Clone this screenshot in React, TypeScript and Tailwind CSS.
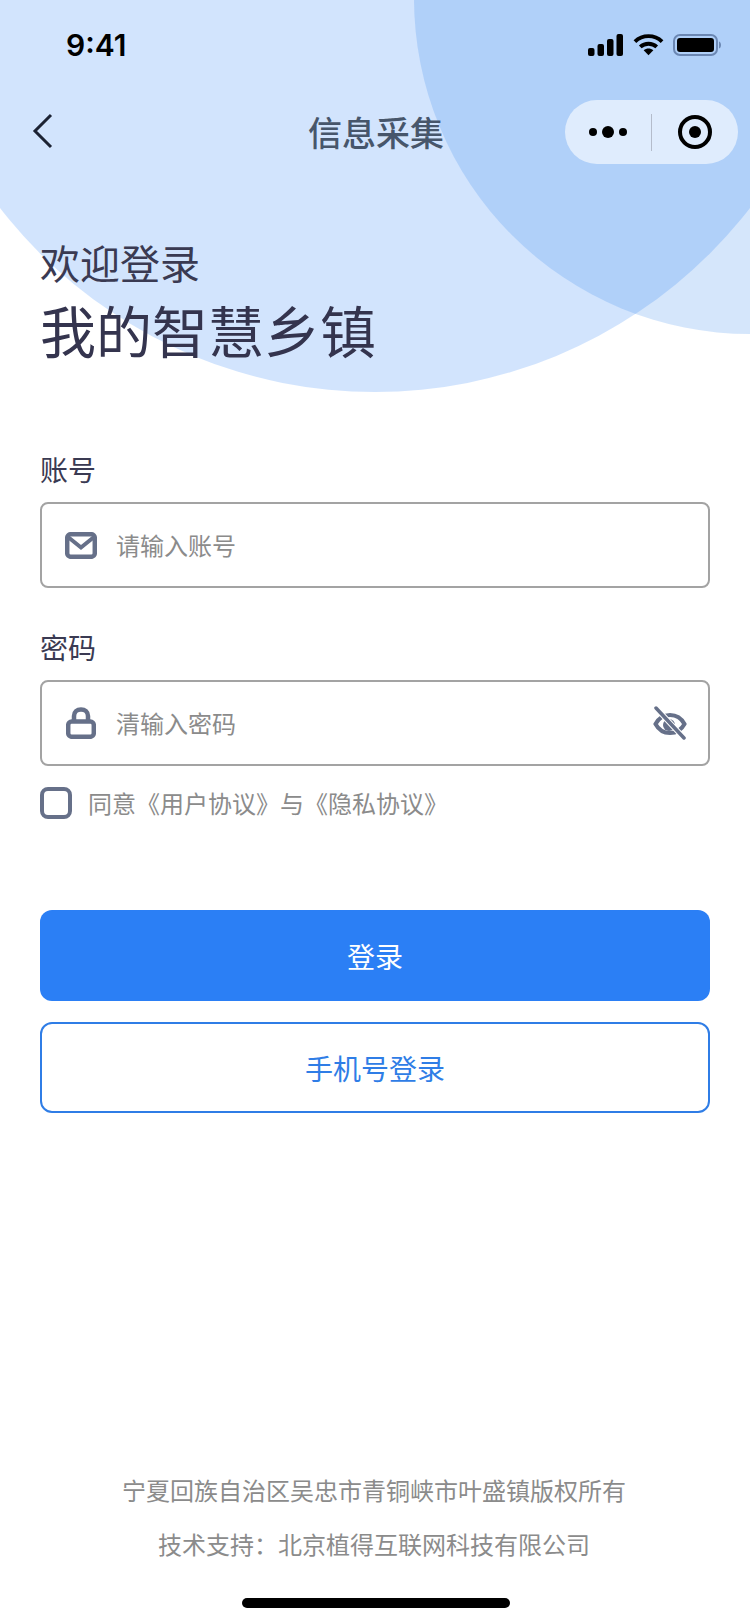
const CJK = "font-['Noto_Sans_CJK_SC','Noto_Sans',sans-serif]"

function SignalIcon() {
  return (
    <svg width="36" height="22" viewBox="0 0 36 22" fill="#000">
      <rect x="0" y="14" width="6.5" height="8" rx="2" />
      <rect x="9.5" y="10" width="6.5" height="12" rx="2" />
      <rect x="19" y="5" width="6.5" height="17" rx="2" />
      <rect x="28.5" y="0" width="6.5" height="22" rx="2" />
    </svg>
  )
}

function WifiIcon() {
  return (
    <svg width="31" height="24" viewBox="0 0 32 24" fill="none" stroke="#000" strokeWidth="4">
      <path d="M2 8.5C9.8 1 22.2 1 30 8.5" />
      <path d="M7.5 14C12.3 9.6 19.7 9.6 24.5 14" />
      <path d="M11 17.5L16 22.5L21 17.5C18 15 14 15 11 17.5Z" fill="#000" stroke="none" />
    </svg>
  )
}

function BatteryIcon() {
  return (
    <svg width="48" height="22" viewBox="0 0 48 22" fill="none">
      <rect x="1" y="1" width="43" height="20" rx="6" stroke="#6b87b3" strokeWidth="2" />
      <rect x="4" y="4" width="37" height="14" rx="3" fill="#000" />
      <path d="M46 7.5C47.5 8 48 9.5 48 11C48 12.5 47.5 14 46 14.5Z" fill="#6b87b3" />
    </svg>
  )
}

function MailIcon() {
  return (
    <svg width="32" height="27" viewBox="0 0 32 27" fill="none" stroke="#667089" strokeWidth="4.5">
      <rect x="2.2" y="2.2" width="27.6" height="22.6" rx="3.5" />
      <path d="M3 5L16 15.5L29 5" strokeWidth="4" />
    </svg>
  )
}

function LockIcon() {
  return (
    <svg width="30" height="32" viewBox="0 0 30 32" fill="none" stroke="#667089" strokeWidth="4.5">
      <rect x="2.2" y="14.5" width="25.6" height="15.3" rx="3.5" />
      <path d="M8 15V9C8 5 11 2.5 15 2.5C19 2.5 22 5 22 9V15" />
    </svg>
  )
}

function EyeOffIcon() {
  return (
    <svg width="34" height="34" viewBox="0 0 34 34" fill="none" stroke="#667089" strokeWidth="4" strokeLinecap="round">
      <path d="M2.5 18C6 11.5 11 9 17 9C23 9 28 11.5 31.5 18C28 24.5 23 27 17 27C11 27 6 24.5 2.5 18Z" />
      <circle cx="16" cy="19" r="6" fill="#667089" stroke="none" />
      <path d="M3 2L31 32" stroke="#fff" strokeWidth="5.5" />
      <path d="M3 2L31 32" strokeWidth="3.5" />
    </svg>
  )
}

function Field({ label, placeholder, icon, trailing }: { label: string; placeholder: string; icon: React.ReactNode; trailing?: React.ReactNode }) {
  return (
    <div>
      <div className="text-[28px] leading-[40px] text-[#3a3a52]">{label}</div>
      <div className="mt-[13px] h-[86px] border-2 border-[#a3a3a3] rounded-lg flex items-center pl-[22px] pr-[21px]">
        <div className="w-[34px] flex justify-center shrink-0">{icon}</div>
        <span className="ml-[18px] flex-1 text-2xl text-[#8b8b8b]">{placeholder}</span>
        {trailing}
      </div>
    </div>
  )
}

export default function App() {
  return (
    <div className={`relative w-[750px] h-[1624px] overflow-hidden bg-white flex flex-col ${CJK}`}>
      {/* background circles */}
      <div className="absolute left-[-99px] top-[-556px] w-[948px] h-[948px] rounded-full bg-[#2b7ff5]/[0.21]" />
      <div className="absolute left-[414px] top-[-338px] w-[672px] h-[672px] rounded-full bg-[#1f78e8]/[0.19]" />

      <div className="relative flex flex-col flex-1">
        {/* status bar */}
        <div className="h-[88px] flex items-center justify-between pl-[66px] pr-[29px] pt-[2px]">
          <span className="font-['Inter',sans-serif] text-[30px] font-semibold text-black">9:41</span>
          <div className="flex items-center gap-[9px]">
            <SignalIcon />
            <WifiIcon />
            <BatteryIcon />
          </div>
        </div>

        {/* nav bar */}
        <div className="relative h-[86px] flex items-center justify-center">
          <svg className="absolute left-[32px] top-[25px]" width="22" height="36" viewBox="0 0 22 36" fill="none" stroke="#1c2233" strokeWidth="3">
            <path d="M19 2L3 18L19 34" />
          </svg>
          <span className="ml-[2px] text-[34px] font-medium text-[#47566b]">信息采集</span>
          <div className="absolute left-[565px] top-[12px] w-[173px] h-[64px] rounded-full bg-white/60 flex items-center">
            <div className="flex-1 flex items-center justify-center gap-[5px]">
              <span className="w-[8px] h-[8px] rounded-full bg-black" />
              <span className="w-[12px] h-[12px] rounded-full bg-black" />
              <span className="w-[8px] h-[8px] rounded-full bg-black" />
            </div>
            <div className="w-px h-[37px] bg-[#b4bccb]" />
            <div className="flex-1 flex items-center justify-center">
              <div className="w-[34px] h-[34px] rounded-full border-[4px] border-black flex items-center justify-center">
                <span className="w-[12px] h-[12px] rounded-full bg-black" />
              </div>
            </div>
          </div>
        </div>

        <div className="flex-1 flex flex-col px-10">
          {/* heading */}
          <div className="mt-[68px] text-[40px] leading-[40px] text-[#3a3a52]">欢迎登录</div>
          <div className="mt-[12px] text-[56px] leading-[70px] text-[#34344e]">我的智慧乡镇</div>

          <div className="mt-[85px]">
            <Field label="账号" placeholder="请输入账号" icon={<MailIcon />} />
          </div>
          <div className="mt-[39px]">
            <Field label="密码" placeholder="清输入密码" icon={<LockIcon />} trailing={<EyeOffIcon />} />
          </div>

          <label className="mt-[21px] flex items-center">
            <span className="w-[32px] h-[32px] rounded-lg border-[4px] border-[#667089]" />
            <span className="ml-[16px] text-2xl text-[#8b8b8b]">同意《用户协议》与《隐私协议》</span>
          </label>

          <button className="mt-[91px] h-[91px] rounded-xl bg-[#2b7ff5] text-[28px] text-white">登录</button>
          <button className="mt-[21px] h-[91px] rounded-xl border-2 border-[#2f7de6] bg-white text-[28px] text-[#2f7de6]">手机号登录</button>

          {/* footer */}
          <div className="mt-auto pr-[2px] flex flex-col items-center text-2xl text-[#8b8b8b]">
            <div className="leading-[32px]">宁夏回族自治区吴忠市青铜峡市叶盛镇版权所有</div>
            <div className="mt-[22px] leading-[32px]">技术支持：北京植得互联网科技有限公司</div>
          </div>
        </div>

        {/* home indicator */}
        <div className="h-[64px] flex justify-center items-end pb-[16px]">
          <div className="ml-[1px] w-[268px] h-[10px] rounded-full bg-black" />
        </div>
      </div>
    </div>
  )
}
